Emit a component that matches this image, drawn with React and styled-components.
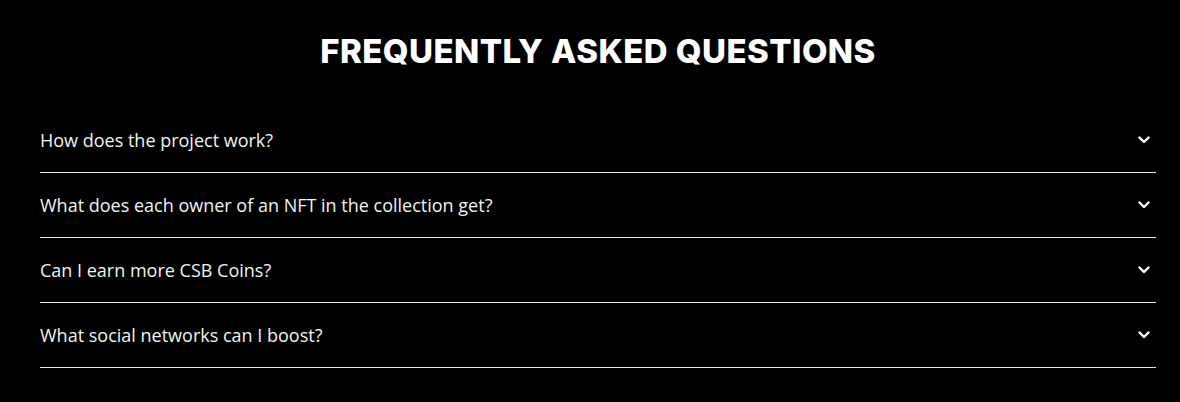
import styled, { createGlobalStyle } from "styled-components";

const GlobalStyle = createGlobalStyle`
	html, body {
		margin: 0;
		background: #000;
	}
`;

const Section = styled.section`
	background: #000;
	min-height: 402px;
	padding: 32px 24px 0 40px;
	box-sizing: border-box;
`;

const Title = styled.h2`
	margin: 0 0 38px;
	text-align: center;
	color: #fff;
	font-family: "Inter", "Liberation Sans", sans-serif;
	font-weight: 800;
	font-size: 33px;
	letter-spacing: 0.45px;
	line-height: 38px;
`;

const List = styled.div`
	display: flex;
	flex-direction: column;
`;

const Row = styled.div`
	display: flex;
	align-items: center;
	justify-content: space-between;
	height: 64px;
	border-bottom: 1px solid #e6e6e6;
`;

const Question = styled.span`
	color: #f2f2f2;
	font-family: "Open Sans", "Liberation Sans", sans-serif;
	font-size: 18px;
	line-height: 24px;
`;

const Chevron = styled.svg`
	width: 12px;
	height: 8px;
	margin-right: 6px;
`;

const questions = [
	"How does the project work?",
	"What does each owner of an NFT in the collection get?",
	"Can I earn more CSB Coins?",
	"What social networks can I boost?",
];

function FaqRow({ text }) {
	return (
		<Row>
			<Question>{text}</Question>
			<Chevron viewBox="0 0 12 8">
				<polyline
					points="1.5,1.5 6,6 10.5,1.5"
					fill="none"
					stroke="#fff"
					strokeWidth="2.4"
					strokeLinecap="round"
					strokeLinejoin="round"
				/>
			</Chevron>
		</Row>
	);
}

function App() {
	return (
		<>
			<GlobalStyle />
			<Section>
				<Title>FREQUENTLY ASKED QUESTIONS</Title>
				<List>
					{questions.map((q) => (
						<FaqRow key={q} text={q} />
					))}
				</List>
			</Section>
		</>
	);
}

export default App;
